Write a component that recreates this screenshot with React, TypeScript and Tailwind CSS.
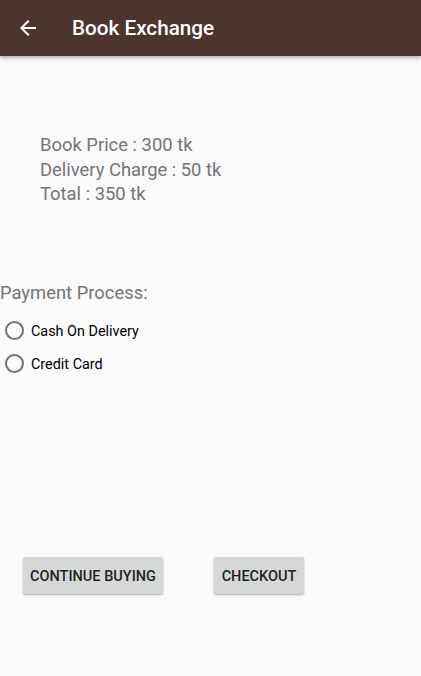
import React from "react";

function Radio({ label }: { label: string }) {
  return (
    <label className="flex items-center h-[33px]">
      <span className="ml-[5px] w-[19px] h-[19px] rounded-full border-2 border-[#737373]" />
      <span className="ml-[7px] pt-[3px] text-[14.4px] text-black">{label}</span>
    </label>
  );
}

export default function App() {
  return (
    <div className="w-[421px] h-[676px] bg-[#fafafa] flex flex-col" style={{ fontFamily: "Roboto, 'Noto Sans', sans-serif" }}>
      <div className="h-[56px] bg-[#4e342e] flex items-center shadow-[0_2px_4px_rgba(0,0,0,0.3)] z-10">
        <svg className="ml-[16px]" width="24" height="24" viewBox="0 0 24 24">
          <path d="M20 11H7.83l5.59-5.59L12 4l-8 8 8 8 1.41-1.41L7.83 13H20v-2z" fill="#fff" />
        </svg>
        <span className="ml-[32px] pt-[1px] text-white text-[20.7px] font-medium">Book Exchange</span>
      </div>

      <div className="mt-[77px] ml-[40px] flex flex-col text-[18.4px] leading-[24.5px] text-[#757575]">
        <span>Book Price : 300 tk</span>
        <span>Delivery Charge : 50 tk</span>
        <span>Total : 350 tk</span>
      </div>

      <div className="mt-[74px] text-[18.4px] leading-[24px] text-[#757575]">Payment Process:</div>
      <div className="mt-[9px] flex flex-col">
        <Radio label="Cash On Delivery" />
        <Radio label="Credit Card" />
      </div>

      <div className="mt-[177px] flex">
        <button className="ml-[23px] w-[140px] h-[37px] pt-[3px] bg-[#d6d7d7] rounded-[2px] shadow-[0_1px_2px_rgba(0,0,0,0.3)] text-[14.5px] font-medium text-[#1f1f1f]">
          CONTINUE BUYING
        </button>
        <button className="ml-[51px] w-[90px] h-[37px] pt-[3px] bg-[#d6d7d7] rounded-[2px] shadow-[0_1px_2px_rgba(0,0,0,0.3)] text-[14.5px] font-medium text-[#1f1f1f]">
          CHECKOUT
        </button>
      </div>
    </div>
  );
}
